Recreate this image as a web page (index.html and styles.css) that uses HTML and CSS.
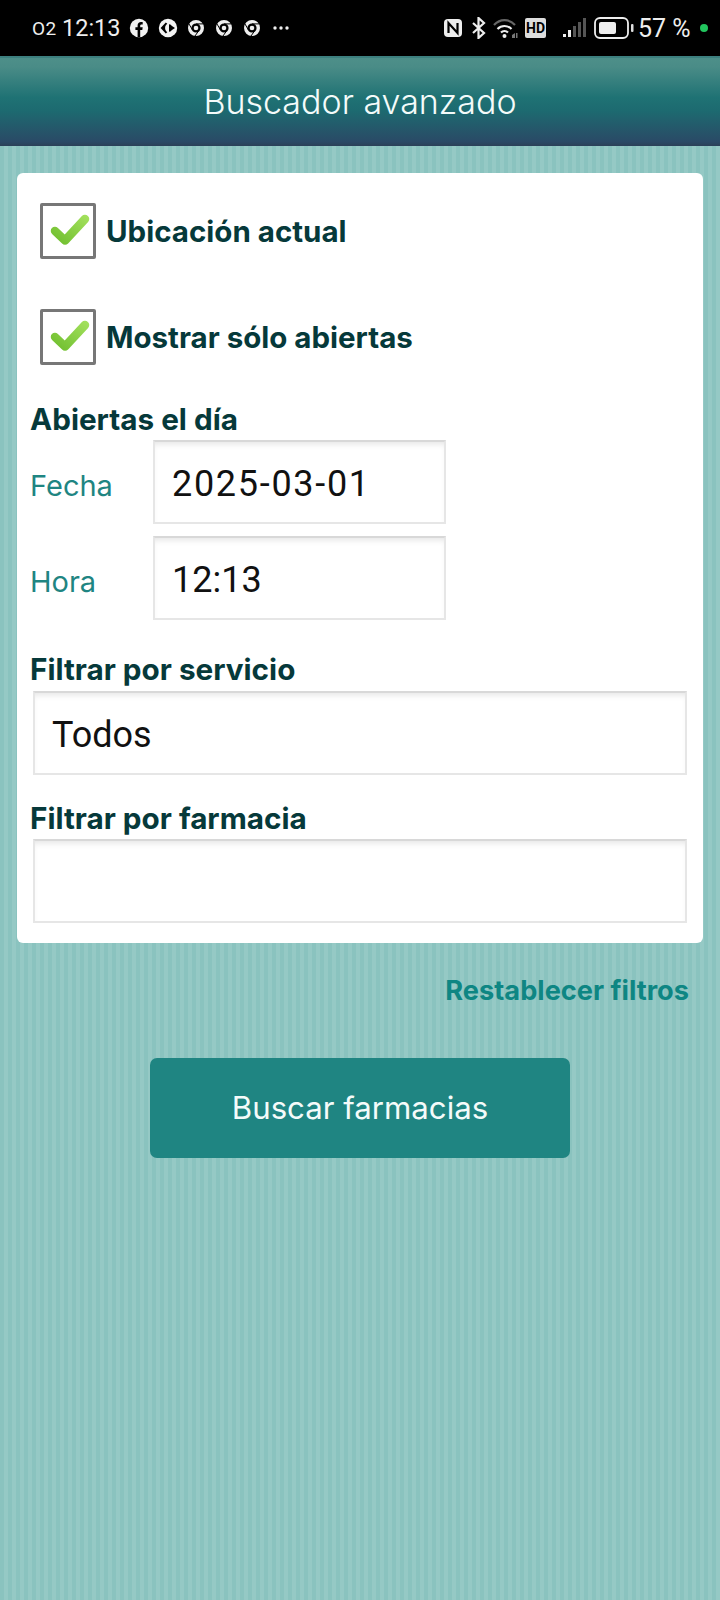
FILE: index.html
```html
<!doctype html>
<html>
 <head>
	<meta charset="UTF-8">
	<title>Buscador avanzado</title>
	<link rel="stylesheet" href="styles.css">
 </head>
 <body>
	<svg class="defs" width="0" height="0">
		<defs>
			<linearGradient id="tick" gradientUnits="userSpaceOnUse" x1="40" y1="8" x2="16" y2="40">
				<stop offset="0" stop-color="#a2e05c"/>
				<stop offset="1" stop-color="#6fbe2e"/>
			</linearGradient>
		</defs>
	</svg>
	<div class="status">
		<div class="status_left">
			<span class="carrier">O2</span>
			<span class="clock">12:13</span>
			<svg class="ico" width="20" height="20" viewBox="0 0 20 20"><circle cx="10" cy="10" r="9.2" fill="#f2f2f2"/><path d="M8.6 19v-7H6.4V9.3h2.2V7.6c0-2.3 1.3-3.5 3.4-3.5.9 0 1.7.1 1.700.1v2.300h-1.100c-1.100 0-1.400.6-1.400 1.300v1.500h2.500l-.4 2.700h-2.100v7z" fill="#000"/></svg>
			<svg class="ico" width="20" height="20" viewBox="0 0 20 20"><circle cx="10" cy="10" r="9.2" fill="#f2f2f2"/><path d="M7.8 4.6 2.6 10l5.2 5.4 1.5-1.2c-1.6-1.1-2.2-2.6-2.2-4.2s.6-3.1 2.2-4.2zM11 6.2v7.6c2 0 2.6-1.600 2.600-1.600L17 10l-3.400-2.200S13 6.200 11 6.200z" fill="#000"/></svg>
			<svg class="ico chrome" width="18" height="18" viewBox="0 0 18 18"><circle cx="9" cy="9" r="6.300" fill="none" stroke="#eee" stroke-width="3.400"/><circle cx="9" cy="9" r="2.300" fill="#eee"/><path d="M9 4.900h7M5.500 11 2 5M11.500 12 8 17" stroke="#000" stroke-width="1"/></svg>
			<svg class="ico chrome" width="18" height="18" viewBox="0 0 18 18"><circle cx="9" cy="9" r="6.300" fill="none" stroke="#eee" stroke-width="3.400"/><circle cx="9" cy="9" r="2.300" fill="#eee"/><path d="M9 4.900h7M5.500 11 2 5M11.500 12 8 17" stroke="#000" stroke-width="1"/></svg>
			<svg class="ico chrome" width="18" height="18" viewBox="0 0 18 18"><circle cx="9" cy="9" r="6.300" fill="none" stroke="#eee" stroke-width="3.400"/><circle cx="9" cy="9" r="2.300" fill="#eee"/><path d="M9 4.900h7M5.500 11 2 5M11.500 12 8 17" stroke="#000" stroke-width="1"/></svg>
			<svg class="ico dots" width="18" height="6" viewBox="0 0 18 6"><circle cx="3" cy="3" r="1.700" fill="#eee"/><circle cx="9" cy="3" r="1.700" fill="#eee"/><circle cx="15" cy="3" r="1.700" fill="#eee"/></svg>
		</div>
		<div class="status_right">
			<svg class="ico nfc" width="20" height="20" viewBox="0 0 20 20"><rect x="1" y="1" width="18" height="18" rx="4" fill="#eee"/><path d="M5.500 15V5l9 10V5" fill="none" stroke="#000" stroke-width="2.200"/></svg>
			<svg class="ico bt" width="16" height="22" viewBox="0 0 16 22"><path d="M2 6l11 10-5.500 5V1L13 6 2 16" fill="none" stroke="#eee" stroke-width="2.200"/></svg>
			<svg class="ico wifi" width="26" height="21" viewBox="0 0 26 21"><path d="M1 7c6-6.500 15-6.500 21 0" fill="none" stroke="#666" stroke-width="2.200"/><path d="M4.500 11c4-4 10-4 14 0M8 14.500c2-2 5-2 7 0" fill="none" stroke="#eee" stroke-width="2.200"/><circle cx="11.500" cy="18" r="2" fill="#eee"/><path d="M19 17l3-2v5h-3zM23 15h1.500v5H23z" fill="#777"/></svg>
			<span class="hd">HD</span>
			<svg class="ico signal" width="23" height="20" viewBox="0 0 23 20"><rect x="0" y="16" width="3" height="3" fill="#eee"/><rect x="5" y="12" width="3" height="7" fill="#eee"/><rect x="10" y="8" width="3" height="11" fill="#555"/><rect x="15" y="4" width="3" height="15" fill="#555"/><rect x="20" y="0" width="3" height="19" fill="#555"/></svg>
			<svg class="ico batt" width="40" height="22" viewBox="0 0 40 22"><rect x="1" y="1" width="33" height="20" rx="5" fill="none" stroke="#eee" stroke-width="1.800"/><rect x="5" y="5" width="17" height="12" rx="2" fill="#eee"/><rect x="37" y="7" width="2.500" height="8" rx="1" fill="#ddd"/></svg>
			<span class="percent">57 %</span>
			<span class="cam_dot"></span>
		</div>
	</div>

	<div class="header">Buscador avanzado</div>

	<form class="card">
		<div class="check_row">
			<span class="check_box">
				<svg class="tick" width="50" height="50" viewBox="0 0 50 50"><path d="M12 25l10 9.500L42 13" fill="none" stroke="url(#tick)" stroke-width="8.500" stroke-linecap="round" stroke-linejoin="round"/></svg>
			</span>
			<span class="check_txt">Ubicación actual</span>
		</div>
		<div class="check_row second">
			<span class="check_box">
				<svg class="tick" width="50" height="50" viewBox="0 0 50 50"><path d="M12 25l10 9.500L42 13" fill="none" stroke="url(#tick)" stroke-width="8.500" stroke-linecap="round" stroke-linejoin="round"/></svg>
			</span>
			<span class="check_txt">Mostrar sólo abiertas</span>
		</div>

		<h3 class="lbl dia">Abiertas el día</h3>
		<div class="date_row">
			<span class="date_lbl">Fecha</span>
			<div class="txt short date_val">2025-03-01</div>
		</div>
		<div class="date_row">
			<span class="date_lbl">Hora</span>
			<div class="txt short">12:13</div>
		</div>

		<h3 class="lbl servicio">Filtrar por servicio</h3>
		<div class="txt wide">Todos</div>
		<h3 class="lbl farmacia">Filtrar por farmacia</h3>
		<div class="txt wide"></div>
	</form>

	<div class="reset_row"><a class="reset">Restablecer filtros</a></div>
	<div class="btn_row"><div class="btn">Buscar farmacias</div></div>
 </body>
</html>
```
FILE: styles.css
```css
html,body{height:100%}
body{
	margin:0;
	min-height:1600px;
	box-sizing:border-box;
	font-family:"Inter","Noto Sans",sans-serif;
	/*fondo de rayas*/
	background-color:#8fc6c2;
	background-image:repeating-linear-gradient(90deg,#8ac3bf 0,#8ac3bf 4px,#95c9c5 4px,#95c9c5 8px);
}
.defs{display:block;height:0}

/*barra de estado*/
.status{
	height:56px;
	background:#000;
	color:#eee;
	display:flex;
	justify-content:space-between;
	align-items:center;
	padding:0 12px 0 32px;
	box-sizing:border-box;
	font-family:"Roboto",sans-serif;
}
.status_left,.status_right{display:flex;align-items:center}
.ico{display:block;flex:none}
.carrier{font-size:19px;width:30px;letter-spacing:.5px}
.clock{font-size:23.500px;width:67px}
.status_left .ico{margin-right:9px}
.status_left .chrome{margin-right:10px}
.status_left .dots{margin:0 0 0 1px}
.status_right .nfc{margin-right:8px}
.status_right .bt,.status_right .wifi{margin-right:6px}
.status_right .signal{margin-right:8px}
.hd{
	background:#ddd;
	color:#000;
	font-size:14px;
	font-weight:700;
	width:21px;
	height:20px;
	line-height:20px;
	text-align:center;
	border-radius:2px;
	margin-right:17px;
}
.status_right .batt{margin-right:4px}
.percent{font-size:25px;width:54px}
.cam_dot{width:8px;height:8px;border-radius:50%;background:#22c55e;margin-left:8px}

/*cabecera*/
.header{
	height:90px;
	line-height:88px;
	text-align:center;
	color:#f4fbfa;
	font-size:34px;
	font-weight:300;
	background:linear-gradient(#4d8f89 0,#4a8c87 10%,#1f7274 45%,#1d6a70 60%,#2a4a66 95%,#2b4058 100%);
	border-top:2px solid #3c7f7e;
	box-sizing:border-box;
}

/*tarjeta*/
.card{
	display:block;
	margin:27px 17px 0;
	height:770px;
	box-sizing:border-box;
	background:#fff;
	border-radius:6px;
	padding:30px 16px 0 13px;
}
.check_row{display:flex;align-items:center;margin-left:10px;height:56px}
.check_row.second{margin-top:50px}
.check_box{
	width:56px;
	height:56px;
	flex:none;
	box-sizing:border-box;
	border:3px solid #777;
	border-radius:2px;
	display:flex;
	align-items:center;
	justify-content:center;
}
.tick{filter:blur(.4px)}
.check_txt{
	margin-left:10px;
	font-size:29.500px;
	font-weight:700;
	color:#06393a;
}
.lbl{
	margin:0;
	font-size:29.700px;
	font-weight:700;
	line-height:34px;
	color:#06393a;
}
.lbl.dia{margin-top:37px;margin-bottom:4px}
.lbl.servicio{margin-top:32px;margin-bottom:5px}
.lbl.farmacia{margin-top:26px;margin-bottom:4px}
.date_row{display:flex;align-items:center}
.date_row+.date_row{margin-top:12px}
.date_lbl{
	width:123px;
	padding-top:6px;
	font-size:29px;
	color:#1f8582;
}
.txt{
	height:84px;
	line-height:84px;
	box-sizing:border-box;
	background:#fff;
	border:2px solid #e6e6e6;
	border-top-color:#d8d8d8;
	box-shadow:inset 0 5px 6px -3px #e4e4e4;
	font-family:"Roboto",sans-serif;
	font-size:36px;
	color:#111;
	padding-left:17px;
}
.date_val{letter-spacing:1.700px}
.short{width:293px}
.wide{width:654px;margin-left:3px}

/*enlace y boton*/
.reset_row{
	text-align:right;
	margin:31px 31px 0 0;
	height:38px;
}
.reset{
	font-size:27.200px;
	font-weight:700;
	color:#0e8683;
}
.btn_row{display:flex;justify-content:center;margin-top:46px}
.btn{
	width:420px;
	height:100px;
	line-height:100px;
	text-align:center;
	background:#1f8582;
	border-radius:7px;
	color:#f4fbfa;
	font-size:31.200px;
	font-weight:400;
}
```
